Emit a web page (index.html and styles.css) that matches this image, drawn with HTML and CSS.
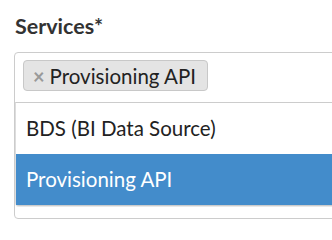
FILE: index.html
```html
<!DOCTYPE html>
<html lang="en">
<head>
	<meta charset="UTF-8">
	<title>Services</title>
	<link rel="stylesheet" href="styles.css">
</head>
<body>
	<div class="form-group">
		<label class="label">Services*</label>
		<div class="select">
			<div class="selection">
				<span class="tag"><span class="tag-remove">&times;</span>Provisioning API</span>
			</div>
			<ul class="dropdown">
				<li>BDS (BI Data Source)</li>
				<li class="active">Provisioning API</li>
			</ul>
		</div>
	</div>
</body>
</html>
```

FILE: styles.css
```css
html,body{margin:0;padding:0;background:#fff;overflow:hidden;}
body{font-family:Lato,"Open Sans",sans-serif;color:#333;}
ul{list-style:none;margin:0;padding:0;}

.form-group{padding:14px 0 0 15px;}
.label{display:block;font-weight:bold;font-size:21.5px;line-height:24px;height:24px;margin-bottom:14px;}

.select{margin-left:-1px;margin-right:-12px;border:1px solid #ccc;border-radius:4px;padding-bottom:12px;}
.selection{height:49px;padding:7px 0 0 8px;box-sizing:border-box;}
.tag{display:inline-flex;align-items:center;height:31px;box-sizing:border-box;padding:0 11px 0 9px;background:#e4e4e4;border:1px solid #c8c8c8;border-radius:4px;font-size:20.5px;color:#222;}
.tag-remove{color:#999;font-weight:bold;font-size:20px;margin-right:5px;}

.dropdown{border:1px solid #ccc;border-right:none;border-left-color:#ddd;border-radius:0 0 0 4px;font-size:20.5px;color:#222;box-shadow:0 1px 0 #e8e8e8;}
.dropdown li{height:51px;line-height:51px;padding-left:10px;}
.dropdown li.active{background:#438ccb;color:#fff;}
```
